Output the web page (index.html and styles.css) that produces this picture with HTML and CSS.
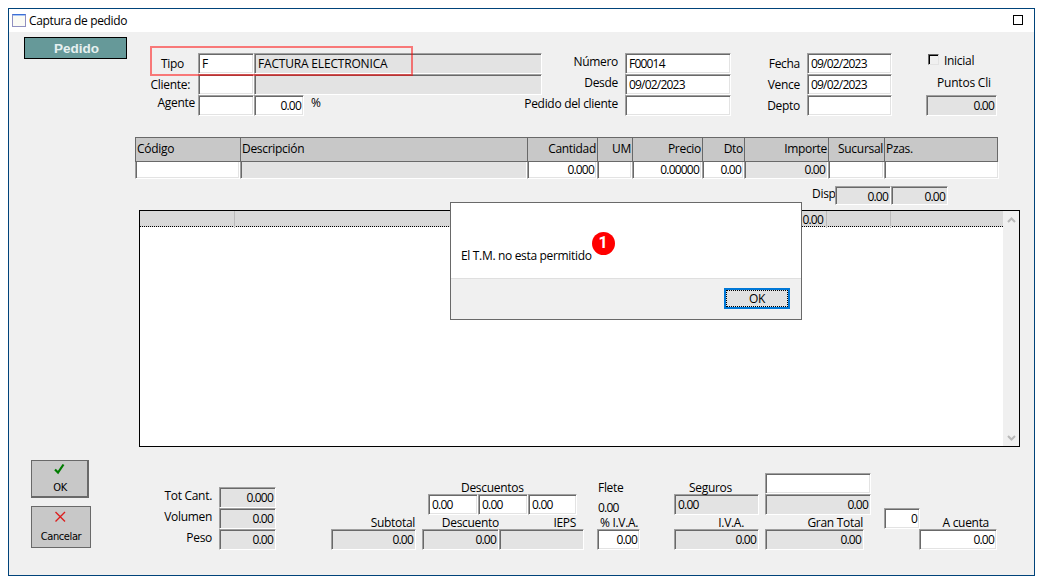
FILE: index.html
```html
<!DOCTYPE html>
<html lang="es">
<head>
<meta charset="utf-8">
<title>Captura de pedido</title>
<link rel="stylesheet" href="styles.css">
</head>
<body>
<div class="window">
  <header class="titlebar">
    <span class="app-icon"></span>
    <span class="title">Captura de pedido</span>
    <span class="maximize"></span>
  </header>
  <main class="content">
    <section class="top">
      <div class="badge">Pedido</div>
      <div class="form form-main">
        <div class="highlight"></div>
        <label class="tipo">Tipo</label><div class="field">F</div><div class="field ro caps">FACTURA ELECTRONICA</div>
        <label class="cliente">Cliente:</label><div class="field"></div><div class="field ro"></div>
        <label class="up">Agente</label><div class="field"></div>
        <div class="percent"><div class="field num">0.00</div><span>%</span></div>
      </div>
      <div class="form form-doc">
        <label class="up5">Número</label><div class="field n">F00014</div>
        <label class="up5">Desde</label><div class="field n">09/02/2023</div>
        <label class="up5">Pedido del cliente</label><div class="field"></div>
      </div>
      <div class="form form-date">
        <label>Fecha</label><div class="field n">09/02/2023</div>
        <label>Vence</label><div class="field n">09/02/2023</div>
        <label>Depto</label><div class="field"></div>
      </div>
      <div class="points">
        <div class="check"><span class="box"></span><span>Inicial</span></div>
        <div class="points-label">Puntos Cli</div>
        <div class="field ro num">0.00</div>
      </div>
    </section>

    <section class="entry">
      <div class="cols head">
        <span>Código</span><span>Descripción</span><span class="r">Cantidad</span><span class="r">UM</span><span class="r">Precio</span><span class="r">Dto</span><span class="r">Importe</span><span class="r">Sucursal</span><span>Pzas.</span>
      </div>
      <div class="cols inputs">
        <div class="field"></div><div class="field ro"></div><div class="field num">0.000</div><div class="field"></div><div class="field num">0.00000</div><div class="field num">0.00</div><div class="field ro num">0.00</div><div class="field"></div><div class="field"></div>
      </div>
    </section>

    <section class="disp">
      <span>Disp</span><div class="field ro num">0.00</div><div class="field ro num">0.00</div>
    </section>

    <section class="list">
      <div class="list-row"><span></span><span class="n">0.00</span><span></span><span></span></div>
      <div class="scroll">
        <svg width="9" height="6" viewBox="0 0 9 6"><path d="M1 5L4.500 1.500L8 5" /></svg>
        <svg width="9" height="6" viewBox="0 0 9 6"><path d="M1 1L4.500 4.500L8 1" /></svg>
      </div>
    </section>

    <section class="bottom">
      <div class="actions">
        <button class="act ok"><svg width="12" height="12" viewBox="0 0 12 12"><path d="M1 6.500L4 9.500L9.500 1.500" fill="none" stroke="#007c00" stroke-width="2.200"/></svg><span>OK</span></button>
        <button class="act cancel"><svg width="12" height="12" viewBox="0 0 12 12"><path d="M0.500 1L10 10.500M10 1L0.500 10.500" fill="none" stroke="#dc1e1e" stroke-width="1.400"/></svg><span>Cancelar</span></button>
      </div>
      <div class="form totals">
        <label>Tot Cant.</label><div class="field ro num">0.000</div>
        <label>Volumen</label><div class="field ro num">0.00</div>
        <label>Peso</label><div class="field ro num">0.00</div>
      </div>
      <div class="stack subtotal"><div class="cap">Subtotal</div><div class="field ro num">0.00</div></div>
      <div class="stack discounts">
        <div class="cap cap-top">Descuentos</div>
        <div class="three"><div class="field n">0.00</div><div class="field n">0.00</div><div class="field n">0.00</div></div>
        <div class="two cap"><span>Descuento</span><span>IEPS</span></div>
        <div class="two"><div class="field ro num">0.00</div><div class="field ro"></div></div>
      </div>
      <div class="stack flete">
        <div class="cap cap-top">Flete</div>
        <div class="flete-value n">0.00</div>
        <div class="cap">% I.V.A.</div>
        <div class="field num">0.00</div>
      </div>
      <div class="stack seguros">
        <div class="cap cap-top">Seguros</div>
        <div class="field ro n">0.00</div>
        <div class="cap iva">I.V.A.</div>
        <div class="field ro num">0.00</div>
      </div>
      <div class="stack grand">
        <div class="field"></div>
        <div class="field ro num">0.00</div>
        <div class="cap">Gran Total</div>
        <div class="field ro num total">0.00</div>
      </div>
      <div class="stack count"><div class="field num">0</div></div>
      <div class="stack account"><div class="cap">A cuenta</div><div class="field num">0.00</div></div>
    </section>
  </main>

  <div class="dialog">
    <div class="message">El T.M. no esta permitido</div>
    <div class="dialog-foot"><button class="dlg-ok"><span>OK</span></button></div>
    <div class="marker">1</div>
  </div>
</div>
</body>
</html>
```
FILE: styles.css
```css
* { box-sizing: border-box; }
body { margin: 0; padding: 8px; background: #fff; color: #000; font: 12px/16px "Open Sans", "Noto Sans", sans-serif; letter-spacing: -0.3px; white-space: nowrap; overflow: hidden; }
.window { position: relative; width: 1027px; height: 568px; border: 1px solid #00437a; background: #f0f0f0; }
.titlebar { display: flex; align-items: center; height: 23px; padding: 0 11px 0 3px; background: #fff; }
.app-icon { width: 14px; height: 13px; border: 1px solid #8f8fc0; border-top: 1px solid #3a6fd8; box-shadow: inset 0 1px #a9c4f2; background: #fafaf4; }
.title { margin-left: 3px; flex: 1; letter-spacing: -0.35px; }
.maximize { width: 10px; height: 10px; border: 1px solid #000; margin-top: -1px; }
.content { display: flex; flex-direction: column; height: 543px; }

.field { height: 21px; padding: 1px 2px 0 3px; line-height: 17px; background: #fff; border: 1px solid; border-color: #a0a0a0 #fff #fff #a0a0a0; box-shadow: inset 1px 1px #696969, inset -1px -1px #e3e3e3; overflow: hidden; }
.ro { background: #e3e3e3; }
.num { text-align: right; padding-right: 2px; letter-spacing: -0.8px; }
.n { letter-spacing: -0.8px; }
.caps { letter-spacing: -0.18px; }

.top { display: flex; height: 105px; padding: 5px 0 0 15px; }
.badge { width: 103px; height: 22px; padding-left: 2px; border: 1px solid #000; background: #669999; color: #e6f0f0; font: bold 13.5px/21px "Liberation Sans", sans-serif; letter-spacing: 0; text-align: center; }
.form { display: grid; grid-auto-rows: 21px; }
.form label { padding: 3px 7px 0 0; text-align: right; line-height: 16px; }
.form label.up { padding: 0 3px 0 0; }
.form label.up5 { padding: 1px 7px 0 0; }
.form label.tipo { padding-right: 14px; }
.form label.cliente { padding-right: 8px; }
.form-main { position: relative; margin: 16px 0 0 23px; grid-template-columns: 48px 56px 288px; }
.highlight { position: absolute; left: 0; top: -7px; width: 263px; height: 30px; border: 2px solid rgba(255, 0, 0, 0.5); z-index: 1; }
.percent { display: flex; }
.percent .field { width: 50px; }
.percent span { margin-left: 7px; }
.form-doc { margin: 16px 0 0 -22px; grid-template-columns: 105px 106px; }
.form-date { margin: 16px 0 0 26px; grid-template-columns: 50px 85px; }
.points { width: 71px; margin: 16px 0 0 34px; }
.check { display: flex; height: 21px; }
.box { width: 11px; height: 11px; margin: 1px 5px 0 2px; border: 1px solid; border-color: #696969 #e3e3e3 #e3e3e3 #696969; box-shadow: inset 1px 1px #000; }
.points-label { height: 21px; padding: 1px 0 0 11px; letter-spacing: -0.2px; }

.entry { margin-left: 126px; width: 864px; }
.cols { display: grid; grid-template-columns: 105px 287px 70px 35px 70px 42px 84px 56px 115px; }
.head { width: 863px; grid-template-columns: 105px 287px 70px 35px 70px 42px 84px 56px 113px; height: 25px; border: 1px solid #696969; border-left: 0; background: #c8c8c8; }
.head span { border-left: 1px solid #696969; padding: 3px 1px; }
.head .r { text-align: right; padding-right: 1px; }
.inputs { height: 17px; }
.inputs .field { height: 17px; padding-top: 0; border-top: 0; line-height: 16px; box-shadow: inset 1px 0 #696969, inset -1px -1px #e3e3e3; }
.inputs .num { padding-right: 2px; }

.disp { display: flex; height: 26px; margin: 7px 0 0 803px; }
.disp .field { width: 56px; height: 19px; }
.disp .field + .field { width: 57px; }
.disp span { width: 23px; }

.list { display: flex; width: 881px; height: 237px; margin: -2px 0 0 130px; border: 1px solid #000; background: #fff; }
.list-row { display: grid; grid-template-columns: 95px 592px 64px 112px; width: 863px; height: 16px; background: #d9d9d9; border-bottom: 1px dotted #000; }
.list-row span { border-right: 1px solid #bbb; text-align: right; padding-right: 3px; line-height: 17px; }
.list-row span:last-child { border: 0; }
.scroll { display: flex; flex-direction: column; justify-content: space-between; align-items: center; width: 16px; padding: 6px 0 5px; background: #f0f0f0; }
.scroll path { fill: none; stroke: #b9b9b9; stroke-width: 2; }

.bottom { display: flex; height: 128px; padding-left: 22px; }
.actions { padding-top: 13px; width: 60px; }
.act { display: flex; flex-direction: column; align-items: center; padding: 3px 0 0; border: 1px solid #696969; background: #c8c8c8; font: 11px/14px "DejaVu Sans Condensed", "DejaVu Sans", sans-serif; font-stretch: condensed; letter-spacing: -0.4px; color: #000; }
.act svg { margin-left: -1px; }
.ok { width: 58px; height: 38px; padding: 2px 0 0 1px; border-right-width: 2px; border-bottom-width: 2px; }
.ok span { margin-top: 6px; }
.cancel { width: 60px; height: 42px; margin-top: 8px; padding-top: 4px; }
.cancel span { margin-top: 7px; }
.totals { margin: 40px 0 0 59px; grid-template-columns: 69px 57px; align-content: start; }
.totals label { padding: 1px 7px 0 0; }
.stack { padding-top: 26px; }
.cap { height: 14px; line-height: 16px; }
.cap-top { margin-top: 7px; }
.subtotal { width: 85px; margin-left: 55px; padding-top: 68px; text-align: right; }
.subtotal .cap { padding-right: 1px; }
.discounts { width: 162px; margin-left: 6px; }
.discounts .cap-top { padding-left: 39px; }
.three { display: grid; grid-template-columns: 50px 50px 49px; margin-left: 6px; }
.two { display: grid; grid-template-columns: 77px 85px; }
.two.cap { text-align: right; }
.two.cap span:last-child { padding-right: 8px; }
.flete { width: 43px; margin-left: 13px; }
.flete .cap { padding-left: 1px; }
.flete .cap:nth-child(3) { padding-left: 3px; }
.flete-value { height: 21px; padding: 6px 0 0 1px; line-height: 16px; }
.seguros { width: 85px; margin-left: 34px; }
.seguros .cap-top { padding-left: 15px; }
.seguros .iva { padding-right: 15px; text-align: right; }
.grand { width: 106px; margin-left: 6px; }
.grand .cap { width: 98px; text-align: right; }
.grand .total { width: 99px; }
.count { width: 36px; margin-left: 13px; padding-top: 61px; }
.account { width: 78px; margin-left: -1px; padding-top: 68px; }
.account .cap { padding-right: 8px; text-align: right; }

.dialog { position: absolute; left: 441px; top: 193px; width: 352px; height: 118px; border: 1px solid #696969; background: #fff; }
.message { height: 75px; padding: 45px 0 0 10px; letter-spacing: -0.33px; }
.dialog-foot { display: flex; justify-content: flex-end; height: 41px; padding: 9px 11px; background: #f0f0f0; border-top: 1px solid #dfdfdf; }
.dlg-ok { width: 66px; height: 21px; padding: 0; border: 2px solid #0078d7; background: #e1e1e1; font: inherit; letter-spacing: inherit; color: #000; }
.dlg-ok span { display: block; height: 17px; line-height: 16px; border: 1px dotted #000; }
.marker { position: absolute; left: 140.500px; top: 28.500px; width: 23px; height: 23px; border-radius: 50%; background: #f00; color: #fff; font: bold 16px/22px Roboto, sans-serif; text-align: center; }
```
